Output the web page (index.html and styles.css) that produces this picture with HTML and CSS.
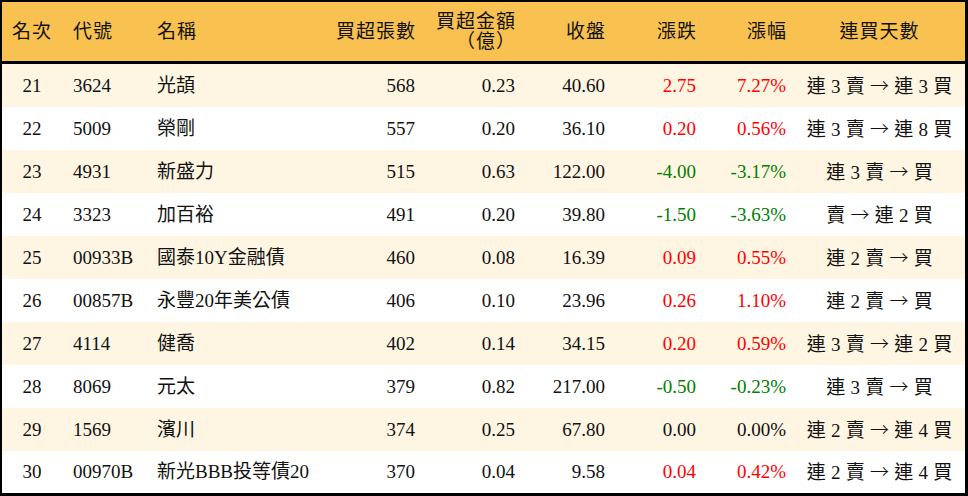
FILE: index.html
```html
<!DOCTYPE html>
<html lang="zh-Hant">
<head>
<meta charset="utf-8">
<title>買超排行</title>
<link rel="stylesheet" href="styles.css">
</head>
<body>
<div class="board">
  <div class="row head">
    <div class="c rank">名次</div>
    <div class="c left">代號</div>
    <div class="c left">名稱</div>
    <div class="c right">買超張數</div>
    <div class="c right two">買超金額<br>（億）</div>
    <div class="c right">收盤</div>
    <div class="c right">漲跌</div>
    <div class="c right">漲幅</div>
    <div class="c center">連買天數</div>
  </div>
  <div class="row odd">
    <div class="c rank">21</div><div class="c left">3624</div><div class="c left">光頡</div>
    <div class="c right">568</div><div class="c right">0.23</div><div class="c right">40.60</div>
    <div class="c right up">2.75</div><div class="c right up">7.27%</div><div class="c center">連 3 賣 <span class="arr">→</span> 連 3 買</div>
  </div>
  <div class="row">
    <div class="c rank">22</div><div class="c left">5009</div><div class="c left">榮剛</div>
    <div class="c right">557</div><div class="c right">0.20</div><div class="c right">36.10</div>
    <div class="c right up">0.20</div><div class="c right up">0.56%</div><div class="c center">連 3 賣 <span class="arr">→</span> 連 8 買</div>
  </div>
  <div class="row odd">
    <div class="c rank">23</div><div class="c left">4931</div><div class="c left">新盛力</div>
    <div class="c right">515</div><div class="c right">0.63</div><div class="c right">122.00</div>
    <div class="c right down">-4.00</div><div class="c right down">-3.17%</div><div class="c center">連 3 賣 <span class="arr">→</span> 買</div>
  </div>
  <div class="row">
    <div class="c rank">24</div><div class="c left">3323</div><div class="c left">加百裕</div>
    <div class="c right">491</div><div class="c right">0.20</div><div class="c right">39.80</div>
    <div class="c right down">-1.50</div><div class="c right down">-3.63%</div><div class="c center">賣 <span class="arr">→</span> 連 2 買</div>
  </div>
  <div class="row odd">
    <div class="c rank">25</div><div class="c left">00933B</div><div class="c left">國泰10Y金融債</div>
    <div class="c right">460</div><div class="c right">0.08</div><div class="c right">16.39</div>
    <div class="c right up">0.09</div><div class="c right up">0.55%</div><div class="c center">連 2 賣 <span class="arr">→</span> 買</div>
  </div>
  <div class="row">
    <div class="c rank">26</div><div class="c left">00857B</div><div class="c left">永豐20年美公債</div>
    <div class="c right">406</div><div class="c right">0.10</div><div class="c right">23.96</div>
    <div class="c right up">0.26</div><div class="c right up">1.10%</div><div class="c center">連 2 賣 <span class="arr">→</span> 買</div>
  </div>
  <div class="row odd">
    <div class="c rank">27</div><div class="c left">4114</div><div class="c left">健喬</div>
    <div class="c right">402</div><div class="c right">0.14</div><div class="c right">34.15</div>
    <div class="c right up">0.20</div><div class="c right up">0.59%</div><div class="c center">連 3 賣 <span class="arr">→</span> 連 2 買</div>
  </div>
  <div class="row">
    <div class="c rank">28</div><div class="c left">8069</div><div class="c left">元太</div>
    <div class="c right">379</div><div class="c right">0.82</div><div class="c right">217.00</div>
    <div class="c right down">-0.50</div><div class="c right down">-0.23%</div><div class="c center">連 3 賣 <span class="arr">→</span> 買</div>
  </div>
  <div class="row odd">
    <div class="c rank">29</div><div class="c left">1569</div><div class="c left">濱川</div>
    <div class="c right">374</div><div class="c right">0.25</div><div class="c right">67.80</div>
    <div class="c right">0.00</div><div class="c right">0.00%</div><div class="c center">連 2 賣 <span class="arr">→</span> 連 4 買</div>
  </div>
  <div class="row last">
    <div class="c rank">30</div><div class="c left">00970B</div><div class="c left">新光BBB投等債20</div>
    <div class="c right">370</div><div class="c right">0.04</div><div class="c right">9.58</div>
    <div class="c right up">0.04</div><div class="c right up">0.42%</div><div class="c center">連 2 賣 <span class="arr">→</span> 連 4 買</div>
  </div>
</div>
</body>
</html>
```

FILE: styles.css
```css
html, body {
  margin: 0;
  padding: 0;
  background: #ffffff;
}
body {
  font-family: "Liberation Serif", "Noto Sans CJK TC", serif;
  font-size: 19px;
  color: #111111;
}
.board {
  width: 968px;
  height: 496px;
  box-sizing: border-box;
  border-style: solid;
  border-color: #000000;
  border-width: 2px 3px 3px 2px;
  overflow: hidden;
  background: #ffffff;
}
.row {
  display: grid;
  grid-template-columns: 60px 84px 184px 96px 100px 90px 91px 90px 168px;
  height: 43px;
  align-items: center;
  background: #ffffff;
}
.row.odd {
  background: #fef5e2;
}
.row.last {
  height: 42px;
}
.row.head {
  height: 59px;
  background: #f9c14f;
  border-bottom: 3px solid #000000;
}
.head .c {
  letter-spacing: 1px;
}
.c {
  white-space: nowrap;
  line-height: 20px;
}
.rank {
  text-align: center;
}
.left {
  text-align: left;
  padding-left: 11px;
}
.right {
  text-align: right;
  padding-right: 11px;
}
.head .right {
  padding-right: 10px;
}
.center {
  text-align: center;
  word-spacing: 0.5px;
  padding-right: 3px;
}
.arr {
  font-family: "Noto Sans CJK TC", sans-serif;
  font-weight: 300;
}
.two {
  line-height: 20px;
}
.up {
  color: #ff0000;
}
.down {
  color: #008000;
}
```
